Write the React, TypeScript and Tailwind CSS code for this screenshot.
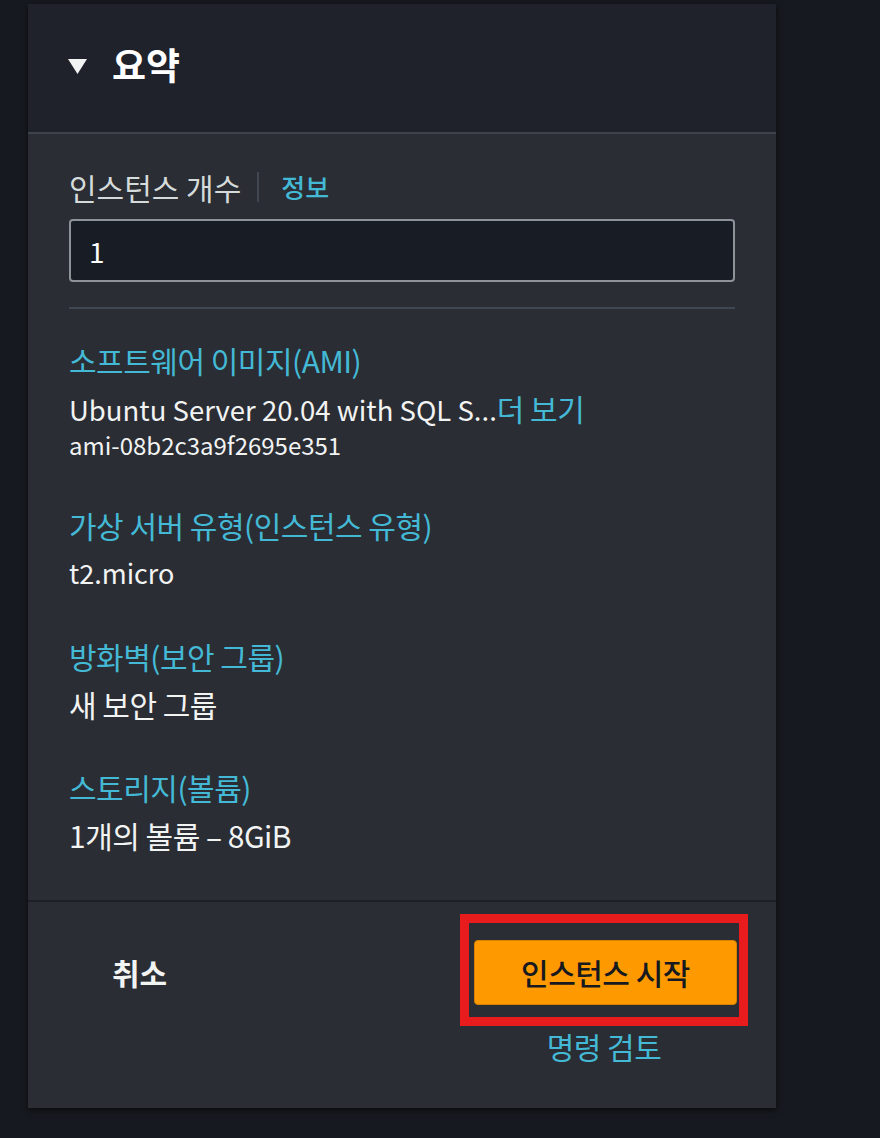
import { ReactNode } from "react"

const font = { fontFamily: '"Noto Sans CJK KR", "Noto Sans", sans-serif' }

// 요약 항목 (라벨 + 값)
function Item({ label, children }: { label: ReactNode; children: ReactNode }) {
  return (
    <div className="flex flex-col">
      <div className="text-[30px] leading-[36px] text-[#44b9d6] tracking-[-0.5px]">{label}</div>
      <div className="mt-[12px]">{children}</div>
    </div>
  )
}

export default function App() {
  return (
    <div className="min-h-[1138px] w-[880px] bg-[#16191f] pt-[4px] pl-[28px]" style={font}>
      <div className="w-[748px] bg-[#2a2d33] shadow-[0_2px_6px_rgba(0,0,0,0.6)]">
        {/* 헤더 */}
        <div className="h-[130px] bg-[#1f222a] border-b-2 border-[#3d434c] flex items-center pl-[40px] pb-[8px]">
          <svg width="19" height="15" viewBox="0 0 19 15" className="mt-[4px]">
            <path d="M0 0 H19 L9.5 15 Z" fill="#f2f3f3" />
          </svg>
          <span className="ml-[25px] text-[37px] font-bold text-white leading-none">요약</span>
        </div>

        {/* 본문 */}
        <div className="px-[41px] pt-[35px] pb-[47px]">
          <div className="flex items-center leading-[36px]">
            <span className="text-[30px] text-[#d5dbdb]">인스턴스 개수</span>
            <span className="ml-[16px] mr-[22px] h-[30px] w-[2px] bg-[#414750]" />
            <span className="text-[26px] font-medium text-[#44b9d6]">정보</span>
          </div>
          <div className="mt-[14px] h-[63px] rounded-[4px] border-2 border-[#8d9399] bg-[#181d25] flex items-center px-[18px] text-[28px] text-white">
            1
          </div>
          <div className="mt-[25px] h-[2px] bg-[#414750]" />

          <div className="mt-[33px] flex flex-col gap-[47px]">
            <Item label="소프트웨어 이미지(AMI)">
              <div className="text-[27.5px] leading-[36px] text-[#f2f3f3]">
                Ubuntu Server 20.04 with SQL S...
                <span className="text-[30px] text-[#44b9d6] tracking-[-0.5px]">더 보기</span>
              </div>
              <div className="mt-[3px] text-[24px] leading-[30px] text-[#f2f3f3]">ami-08b2c3a9f2695e351</div>
            </Item>
            <Item label="가상 서버 유형(인스턴스 유형)">
              <div className="text-[27px] leading-[36px] text-[#f2f3f3]">t2.micro</div>
            </Item>
            <Item label="방화벽(보안 그룹)">
              <div className="text-[30px] leading-[36px] text-[#f2f3f3] tracking-[-0.5px]">새 보안 그룹</div>
            </Item>
            <Item label="스토리지(볼륨)">
              <div className="text-[30px] leading-[36px] text-[#f2f3f3] tracking-[-0.5px]">1개의 볼륨 – 8GiB</div>
            </Item>
          </div>
        </div>

        {/* 푸터 */}
        <div className="border-t-2 border-[#1c1f25] pt-[12px] pb-[44px] pl-[84px] pr-[28px] flex justify-between">
          <div className="mt-[40px] text-[30px] font-bold text-[#f2f3f3] leading-[36px]">취소</div>
          <div className="flex flex-col items-center">
            <div className="border-[9px] border-[#e81c1c] pl-[5px] pr-[2px] pt-[17px] pb-[12px]">
              <button className="w-[263px] h-[65px] rounded-[4px] border border-[#d98200] bg-[#ff9900] text-[30px] font-medium text-[#16191f] tracking-[-0.5px]">
                인스턴스 시작
              </button>
            </div>
            <div className="mt-[2px] text-[30px] text-[#44b9d6] leading-[36px] tracking-[-0.5px]">명령 검토</div>
          </div>
        </div>
      </div>
    </div>
  )
}
